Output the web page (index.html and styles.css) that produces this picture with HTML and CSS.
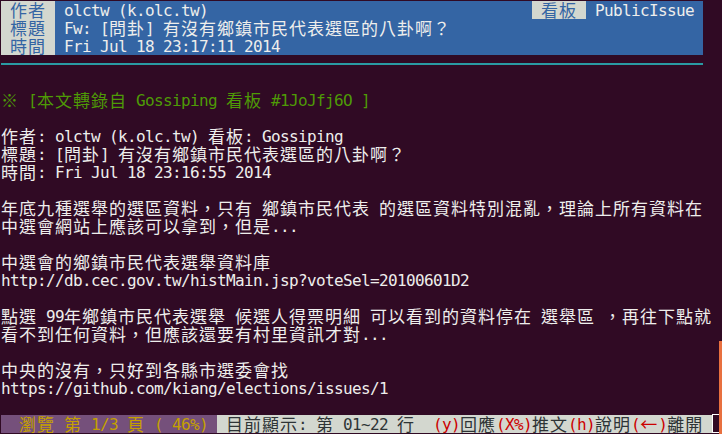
FILE: index.html
```html
<!DOCTYPE html>
<html lang="zh-Hant">
<head>
<meta charset="utf-8">
<title>PTT - PublicIssue</title>
<link rel="stylesheet" href="styles.css">
</head>
<body>
<div class="term">
  <div class="hdr">
    <div class="lbl"> <span class="c">作者</span> </div>
    <div class="val fill"> olctw (k.olc.tw)</div>
    <div class="lbl"> <span class="c">看板</span> </div>
    <div class="val board"> PublicIssue </div>
  </div>
  <div class="hdr">
    <div class="lbl"> <span class="c">標題</span> </div>
    <div class="val fill"> Fw: [<span class="c">問卦</span>] <span class="c">有沒有鄉鎮市民代表選區的八卦啊？</span></div>
  </div>
  <div class="hdr">
    <div class="lbl"> <span class="c">時間</span> </div>
    <div class="val fill"> Fri Jul 18 23:17:11 2014</div>
  </div>
  <div class="rulerow"><div class="rule"></div></div>
  <div class="row"></div>
  <div class="row green"><span class="c">※</span> [<span class="c">本文轉錄自</span> Gossiping <span class="c">看板</span> #1JoJfj6O ]</div>
  <div class="row"></div>
  <div class="row"><span class="c">作者</span>: olctw (k.olc.tw) <span class="c">看板</span>: Gossiping</div>
  <div class="row"><span class="c">標題</span>: [<span class="c">問卦</span>] <span class="c">有沒有鄉鎮市民代表選區的八卦啊？</span></div>
  <div class="row"><span class="c">時間</span>: Fri Jul 18 23:16:55 2014</div>
  <div class="row"></div>
  <div class="row"><span class="c">年底九種選舉的選區資料，只有</span> <span class="c">鄉鎮市民代表</span> <span class="c">的選區資料特別混亂，理論上所有資料在</span></div>
  <div class="row"><span class="c">中選會網站上應該可以拿到，但是</span>...</div>
  <div class="row"></div>
  <div class="row"><span class="c">中選會的鄉鎮市民代表選舉資料庫</span></div>
  <div class="row">http://db.cec.gov.tw/histMain.jsp?voteSel=20100601D2</div>
  <div class="row"></div>
  <div class="row"><span class="c">點選</span> 99<span class="c">年鄉鎮市民代表選舉</span> <span class="c">候選人得票明細</span> <span class="c">可以看到的資料停在</span> <span class="c">選舉區</span> <span class="c">，再往下點就</span></div>
  <div class="row"><span class="c">看不到任何資料，但應該還要有村里資訊才對</span>...</div>
  <div class="row"></div>
  <div class="row"><span class="c">中央的沒有，只好到各縣市選委會找</span></div>
  <div class="row">https://github.com/kiang/elections/issues/1</div>
  <div class="row"></div>
  <div class="foot">
    <div class="pg">  <span class="c">瀏覽</span> <span class="c">第</span> 1/3 <span class="c">頁</span> ( 46%) </div>
    <div class="st"> <span class="c">目前顯示</span>: <span class="c">第</span> 01~22 <span class="c">行</span>  <span class="key">(y)</span><span class="c">回應</span><span class="key">(X%)</span><span class="c">推文</span><span class="key">(h)</span><span class="c">說明</span><span class="key">(<span class="c">←</span>)</span><span class="c">離開</span> </div>
    <div class="cursor"></div>
  </div>
</div>
<div class="scroll"></div>
</body>
</html>
```
FILE: styles.css
```css
html, body {
  margin: 0;
  padding: 0;
  background: #300a24;
}
body {
  position: relative;
  width: 722px;
  height: 434px;
  overflow: hidden;
}
.term {
  padding: 1px 0 0 1px;
  font-family: "DejaVu Sans Mono", monospace;
  font-size: 16px;
  letter-spacing: -0.6328px;
  line-height: 20px;
  color: #eeeeec;
}
.row, .lbl, .val, .pg, .st {
  white-space: pre;
}
.c {
  font-family: "Noto Sans CJK TC", "Noto Sans CJK SC", sans-serif;
  font-size: 17px;
  letter-spacing: 1px;
  line-height: 0;
  vertical-align: -1px;
}
.row {
  height: 18px;
}
.hdr {
  display: flex;
  width: 702px;
  height: 18px;
}
.lbl {
  width: 54px;
  height: 18px;
  background: #d3d7cf;
  color: #3465a4;
}
.val {
  height: 18px;
  background: #3465a4;
  color: #eeeeec;
}
.fill {
  flex: 1;
}
.board {
  width: 117px;
}
.rulerow {
  display: flex;
  align-items: center;
  height: 18px;
}
.rule {
  width: 702px;
  height: 2px;
  background: #2a9aa3;
}
.green {
  color: #4e9a06;
}
.foot {
  display: flex;
  height: 18px;
}
.pg {
  width: 216px;
  height: 18px;
  background: #75507b;
  color: #c4a000;
}
.st {
  width: 495px;
  height: 18px;
  background: #d3d7cf;
  color: #2e3436;
}
.key {
  color: #cc0000;
}
.cursor {
  width: 9px;
  height: 19px;
  box-sizing: border-box;
  border: 1px solid #ffffff;
  margin-top: -1px;
}
.scroll {
  position: absolute;
  right: 0;
  top: 341px;
  width: 3px;
  height: 93px;
  background: #e8703f;
}
```
